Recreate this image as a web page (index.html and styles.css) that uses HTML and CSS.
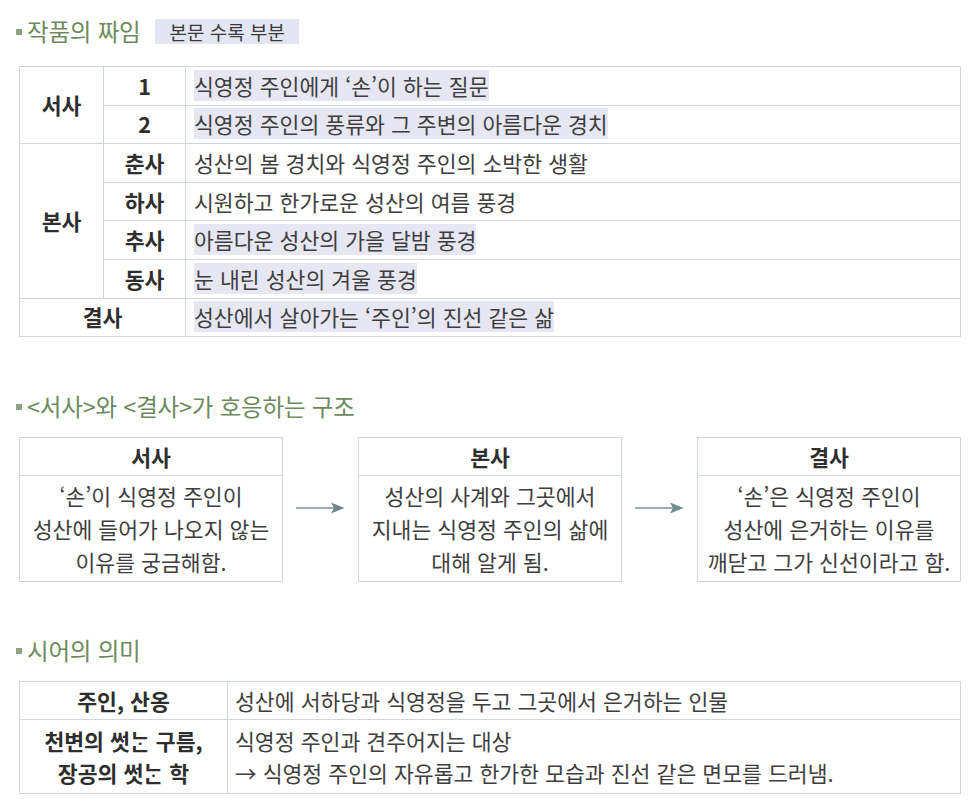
FILE: index.html
```html
<!DOCTYPE html>
<html lang="ko">
<head>
<meta charset="utf-8">
<link rel="stylesheet" href="styles.css">
</head>
<body>
<div class="page">
  <div class="heading h1">
    <span class="bullet"></span><span class="title">작품의 짜임</span><span class="tag">본문 수록 부분</span>
  </div>
  <table class="structure">
    <colgroup><col class="c1"><col class="c2"><col class="c3"></colgroup>
    <tr>
      <th rowspan="2">서사</th>
      <th class="num">1</th>
      <td><span class="hl">식영정 주인에게 ‘손’이 하는 질문</span></td>
    </tr>
    <tr>
      <th class="num">2</th>
      <td><span class="hl">식영정 주인의 풍류와 그 주변의 아름다운 경치</span></td>
    </tr>
    <tr>
      <th rowspan="4">본사</th>
      <th>춘사</th>
      <td>성산의 봄 경치와 식영정 주인의 소박한 생활</td>
    </tr>
    <tr>
      <th>하사</th>
      <td>시원하고 한가로운 성산의 여름 풍경</td>
    </tr>
    <tr>
      <th>추사</th>
      <td><span class="hl">아름다운 성산의 가을 달밤 풍경</span></td>
    </tr>
    <tr>
      <th>동사</th>
      <td><span class="hl">눈 내린 성산의 겨울 풍경</span></td>
    </tr>
    <tr>
      <th colspan="2">결사</th>
      <td><span class="hl">성산에서 살아가는 ‘주인’의 진선 같은 삶</span></td>
    </tr>
  </table>

  <div class="heading h2">
    <span class="bullet"></span><span class="title">&lt;서사&gt;와 &lt;결사&gt;가 호응하는 구조</span>
  </div>
  <div class="flow">
    <div class="box">
      <div class="box-head">서사</div>
      <div class="box-body">‘손’이 식영정 주인이<br>성산에 들어가 나오지 않는<br>이유를 궁금해함.</div>
    </div>
    <div class="arrow"><svg width="49" height="12" viewBox="0 0 49 12"><line x1="0" y1="6" x2="38" y2="6" stroke="#7a9396" stroke-width="1.3"/><path d="M35 0.5 L48.5 6 L35 11.5 L38 6 Z" fill="#6f8a8e"/></svg></div>
    <div class="box">
      <div class="box-head">본사</div>
      <div class="box-body">성산의 사계와 그곳에서<br>지내는 식영정 주인의 삶에<br>대해 알게 됨.</div>
    </div>
    <div class="arrow"><svg width="49" height="12" viewBox="0 0 49 12"><line x1="0" y1="6" x2="38" y2="6" stroke="#7a9396" stroke-width="1.3"/><path d="M35 0.5 L48.5 6 L35 11.5 L38 6 Z" fill="#6f8a8e"/></svg></div>
    <div class="box">
      <div class="box-head">결사</div>
      <div class="box-body">‘손’은 식영정 주인이<br>성산에 은거하는 이유를<br>깨닫고 그가 신선이라고 함.</div>
    </div>
  </div>

  <div class="heading h3">
    <span class="bullet"></span><span class="title">시어의 의미</span>
  </div>
  <table class="words">
    <colgroup><col class="w1"><col class="w2"></colgroup>
    <tr class="r1">
      <th>주인, 산옹</th>
      <td>성산에 서하당과 식영정을 두고 그곳에서 은거하는 인물</td>
    </tr>
    <tr class="r2">
      <th>천변의 썻ᄂᆞᆫ 구름,<br>장공의 썻ᄂᆞᆫ 학</th>
      <td>식영정 주인과 견주어지는 대상<br>→ 식영정 주인의 자유롭고 한가한 모습과 진선 같은 면모를 드러냄.</td>
    </tr>
  </table>
</div>
</body>
</html>
```

FILE: styles.css
```css
html, body {
  margin: 0;
  padding: 0;
  background: #ffffff;
}

body {
  font-family: "Noto Sans CJK KR", "Noto Sans", sans-serif;
  color: #3b3b3b;
}

.page {
  width: 942px;
  padding: 0 0 0 19px;
}

.heading {
  display: flex;
  align-items: center;
  height: 26px;
  margin-left: -3px;
}

.h1 { margin-top: 18px; }
.h2 { margin-top: 56px; }
.h3 { margin-top: 55px; }

.bullet {
  display: inline-block;
  width: 6px;
  height: 6px;
  background: #8ea283;
  margin-right: 5px;
  margin-top: 2px;
}

.title {
  font-size: 23.5px;
  color: #6d8a5d;
  letter-spacing: -0.2px;
}

.tag {
  margin-left: 15px;
  background: #e3e5f2;
  color: #3a3a3a;
  font-size: 19px;
  padding: 0 14px 0 14px;
  height: 25px;
  line-height: 25px;
}

table {
  border-collapse: collapse;
  table-layout: fixed;
  width: 942px;
}

th, td {
  border: 1px solid #d0d7da;
  padding: 0;
  font-size: 21.6px;
}

th {
  font-weight: 700;
  color: #2e2e2e;
  text-align: center;
}

td {
  text-align: left;
  padding-left: 8px;
  color: #3e3e3e;
}

.structure {
  margin-top: 22px;
}

.structure tr {
  height: 38.6px;
}

.structure th, .structure td {
  line-height: 30px;
}

.c1 { width: 84px; }
.c2 { width: 82px; }

.hl {
  background: #e6e7f3;
  padding: 0;
}

.flow {
  display: flex;
  align-items: stretch;
  margin-top: 18px;
}

.box {
  width: 264px;
  box-sizing: border-box;
  border: 1px solid #d0d7da;
  display: flex;
  flex-direction: column;
}

.box-head {
  height: 37px;
  border-bottom: 1px solid #d0d7da;
  display: flex;
  align-items: center;
  justify-content: center;
  font-weight: 700;
  font-size: 21.6px;
  color: #2e2e2e;
}

.box-body {
  text-align: center;
  font-size: 21.6px;
  line-height: 33px;
  padding: 3px 0 3px;
  color: #3e3e3e;
}

.arrow {
  width: 75px;
  display: flex;
  align-items: center;
  justify-content: center;
  padding-bottom: 3px;
}

.words {
  margin-top: 18px;
}

.w1 { width: 208px; }

.words tr.r1 { height: 38px; }
.words tr.r2 { height: 74px; }

.words td {
  line-height: 32px;
  padding-left: 7px;
}

.words th {
  line-height: 32px;
}
```
